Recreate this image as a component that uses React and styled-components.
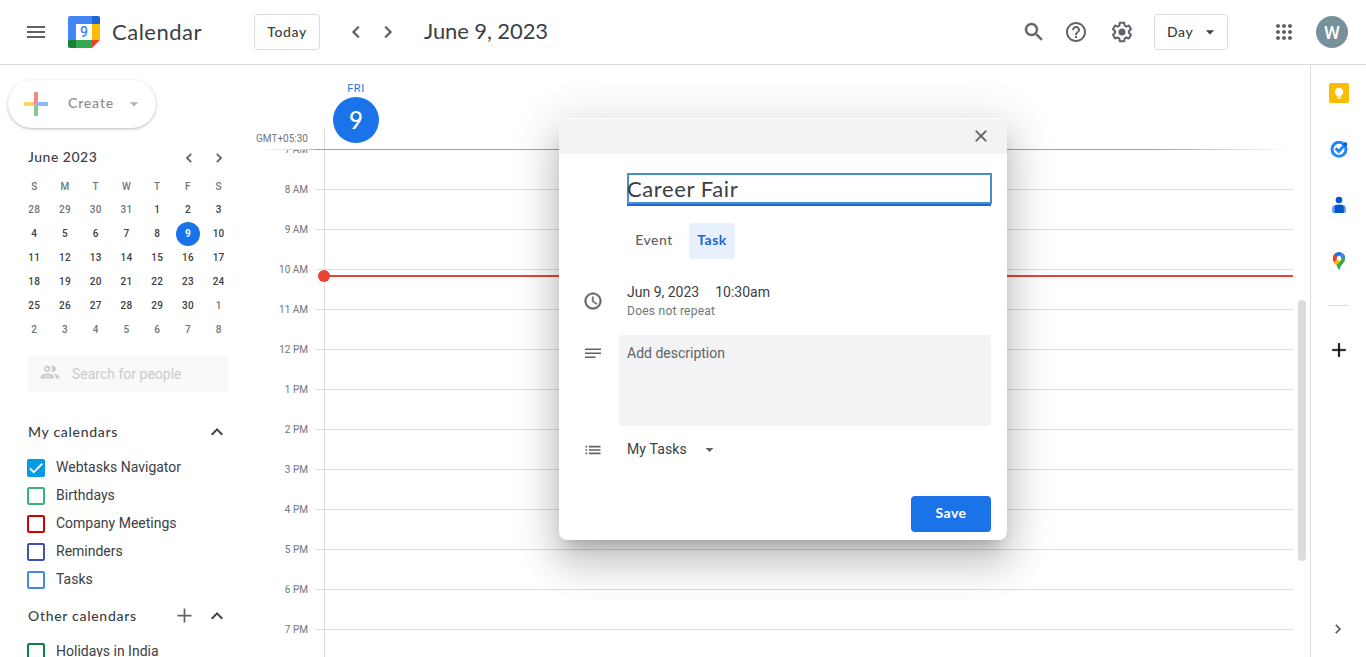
import React from "react";
import styled, { createGlobalStyle, css } from "styled-components";

const GlobalStyle = createGlobalStyle`
  *, *::before, *::after { box-sizing: border-box; }
  html, body { margin: 0; padding: 0; background: #fff; overflow: hidden; }
  body { font-family: Roboto, "Liberation Sans", sans-serif; color: #3c4043; }
  button { font: inherit; color: inherit; background: none; border: 0; padding: 0; margin: 0; }
  svg { display: block; flex: none; }
`;

const display = css`
  font-family: Lato, Roboto, sans-serif;
`;

const Page = styled.div`
  position: relative;
  display: flex;
  flex-direction: column;
  height: 657px;
  width: 1366px;
  overflow: hidden;
`;

/* Top bar */

const TopBar = styled.header`
  display: flex;
  align-items: center;
  height: 65px;
  flex: none;
  padding: 0 18px 1px 24px;
  border-bottom: 1px solid #dadce0;
  color: #5f6368;
`;

const Brand = styled.div`
  display: flex;
  align-items: center;
  gap: 12px;
  margin-left: 20px;
  width: 186px;
`;

const BrandName = styled.span`
  ${display}
  font-size: 22px;
  letter-spacing: 0.5px;
  color: #3c4043;
  white-space: nowrap;
`;

const OutlineButton = styled.button`
  ${display}
  display: flex;
  align-items: center;
  justify-content: ${(p) => (p.$menu ? "space-between" : "center")};
  width: ${(p) => p.$width}px;
  height: 36px;
  padding: ${(p) => (p.$menu ? "0 7px 0 12px" : "0")};
  border: 1px solid #dadce0;
  border-radius: 4px;
  font-size: 14px;
  font-weight: 500;
  letter-spacing: 0.6px;
  color: #3c4043;
`;

const Arrows = styled.div`
  display: flex;
  gap: 8px;
  margin: 0 24px;
`;

const CurrentDate = styled.h1`
  ${display}
  margin: 0;
  flex: 1;
  padding-bottom: 2px;
  font-size: 22px;
  font-weight: 400;
  letter-spacing: -0.1px;
  color: #3c4043;
`;

const Tools = styled.div`
  display: flex;
  align-items: center;
  gap: 22px;
  margin-right: 20px;
  & > svg:first-child { margin-right: -4px; }
`;

const AppsSlot = styled.div`
  margin-left: 44px;
`;

const Avatar = styled.div`
  display: flex;
  align-items: center;
  justify-content: center;
  width: 32px;
  height: 32px;
  margin-left: 20px;
  padding-top: 1px;
  border-radius: 50%;
  background: #78909c;
  color: #fff;
  font-size: 18px;
  font-weight: 500;
`;

/* Left column */

const Body = styled.div`
  display: flex;
  flex: 1;
  min-height: 0;
`;

const Sidebar = styled.aside`
  width: 256px;
  flex: none;
  padding-top: 15px;
  overflow: hidden;
`;

const CreateButton = styled.button`
  ${display}
  display: flex;
  align-items: center;
  width: 148px;
  height: 48px;
  margin-left: 8px;
  padding: 0 12px 0 10px;
  border-radius: 24px;
  box-shadow: 0 1px 2px rgba(60, 64, 67, 0.2), 0 1px 3px 1px rgba(60, 64, 67, 0.12);
  font-size: 14px;
  font-weight: 500;
  letter-spacing: 0.85px;
  & > * { opacity: 0.6; }
`;

const CreateLabel = styled.span`
  flex: 1;
  margin-left: 14px;
  padding-bottom: 4px;
  text-align: left;
`;

const MonthBar = styled.div`
  ${display}
  display: flex;
  align-items: center;
  height: 32px;
  margin-top: 13px;
  padding: 0 28px 1px 28px;
  font-size: 14px;
  font-weight: 500;
  letter-spacing: 0.5px;
`;

const MonthArrows = styled.div`
  display: flex;
  gap: 12px;
  margin-left: auto;
  padding-top: 2px;
  color: #5f6368;
`;

const MonthGrid = styled.div`
  display: grid;
  grid-template-columns: repeat(7, 1fr);
  grid-template-rows: 25px repeat(6, 24px);
  width: 215px;
  margin-left: 19px;
`;

const MonthCell = styled.div`
  display: flex;
  align-items: center;
  justify-content: center;
  padding-top: ${(p) => (p.$head ? 2 : 0)}px;
  padding-bottom: ${(p) => (p.$head ? 0 : 1)}px;
  font-size: 10px;
  font-weight: 500;
  letter-spacing: 0.3px;
  color: ${(p) => (p.$dim ? "#70757a" : "#3c4043")};
`;

const Selected = styled.span`
  display: flex;
  align-items: center;
  justify-content: center;
  flex: none;
  width: 24px;
  height: 24px;
  margin-bottom: -1px;
  padding-bottom: 1px;
  border-radius: 50%;
  background: #1a73e8;
  color: #fff;
  font-weight: 700;
`;

const PeopleSearch = styled.div`
  display: flex;
  align-items: center;
  gap: 11px;
  width: 200px;
  height: 36px;
  margin: 14px 0 0 28px;
  padding: 0 11px;
  border-radius: 4px;
  background: #f8f9f9;
  color: #c9cbcd;
  font-size: 14px;
  & > svg { margin-top: -4px; }
`;

const SectionHead = styled.div`
  ${display}
  display: flex;
  align-items: center;
  height: 36px;
  margin-top: ${(p) => p.$gap}px;
  padding: 0 27px 0 28px;
  font-size: 14px;
  font-weight: 500;
  letter-spacing: 0.7px;
  & > span { flex: 1; padding-bottom: 2px; }
`;

const SectionIcons = styled.div`
  display: flex;
  align-items: center;
  gap: 10px;
  & > svg:first-child { margin-top: -2px; }
`;

const CalendarRow = styled.label`
  display: flex;
  align-items: center;
  gap: 11px;
  height: 28px;
  padding: 0 0 0 27px;
  font-size: 14px;
  & > span { margin-top: -2px; }
`;

const Box = styled.i`
  display: flex;
  align-items: center;
  justify-content: center;
  width: 18px;
  height: 18px;
  border: 2px solid ${(p) => p.$color};
  border-radius: 2px;
  background: ${(p) => (p.$checked ? p.$color : "transparent")};
`;

const CalendarList = styled.div`
  padding-top: 4px;
`;

/* Day view */

const DayView = styled.main`
  display: flex;
  flex-direction: column;
  flex: 1;
  min-width: 0;
`;

const DayHead = styled.div`
  display: flex;
  height: 84px;
  flex: none;
`;

const Zone = styled.div`
  display: flex;
  align-items: flex-end;
  justify-content: flex-end;
  width: 60px;
  padding: 0 8px 5px 0;
  font-size: 10px;
  color: #70757a;
  white-space: nowrap;
`;

const HeadTick = styled.div`
  align-self: flex-end;
  width: 9px;
  height: 20px;
  border-right: 1px solid #dadce0;
`;

const DayLabel = styled.div`
  display: flex;
  flex-direction: column;
  align-items: center;
  width: 46px;
  margin-left: 8px;
  padding-top: 17px;
  color: #1a73e8;
  font-size: 11px;
  line-height: 14px;
  letter-spacing: 0.6px;
`;

const DayNumber = styled.div`
  ${display}
  display: flex;
  align-items: center;
  justify-content: center;
  width: 46px;
  height: 46px;
  margin-top: 1px;
  border-radius: 50%;
  background: #1a73e8;
  color: #fff;
  font-size: 24px;
  font-weight: 500;
  letter-spacing: 0;
`;

const HeadRule = styled.div`
  flex: none;
  height: 1px;
  width: 1038px;
  background: linear-gradient(to right, #fff 0, #d4d4d4 52px, #a2a2a2 61px, #a2a2a2 900px, #fff 1036px);
`;

const Scroller = styled.div`
  display: flex;
  flex: 1;
  min-height: 0;
  overflow: hidden;
`;

const Hours = styled.div`
  position: relative;
  width: 1038px;
  margin-top: -1px;
`;

const HourRow = styled.div`
  display: flex;
  height: 40px;
`;

const HourLabel = styled.div`
  width: 60px;
  height: 12px;
  margin-top: -5px;
  padding-right: 8px;
  text-align: right;
  font-size: 10px;
  line-height: 12px;
  color: #70757a;
`;

const HourTick = styled.div`
  width: 8px;
  border-top: 1px solid #dadce0;
`;

const HourCell = styled.div`
  flex: 1;
  border-top: 1px solid #dadce0;
  border-left: 1px solid #dadce0;
`;

const NowLine = styled.div`
  position: absolute;
  top: 126px;
  left: 68px;
  width: 969px;
  height: 2px;
  background: #ea4335;
  &::before {
    content: "";
    position: absolute;
    left: -6px;
    top: -5px;
    width: 12px;
    height: 12px;
    border-radius: 50%;
    background: #ea4335;
  }
`;

const ScrollThumb = styled.div`
  width: 8px;
  height: 261px;
  margin: 150px 0 0 4px;
  border-radius: 4px;
  background: #dadce0;
`;

/* Right rail */

const Rail = styled.aside`
  display: flex;
  flex-direction: column;
  align-items: center;
  width: 56px;
  padding-top: 18px;
  border-left: 1px solid #dadce0;
`;

const RailApp = styled.div`
  display: flex;
  align-items: center;
  justify-content: center;
  width: 20px;
  height: 20px;
  margin-bottom: 36px;
`;

const RailRule = styled.div`
  width: 20px;
  height: 1px;
  margin: -2px 0 34px;
  background: #dadce0;
`;

const RailToggle = styled.div`
  margin: auto 2px 19px 0;
  color: #5f6368;
`;

/* Task dialog */

const Dialog = styled.section`
  position: absolute;
  left: 559px;
  top: 118px;
  width: 448px;
  height: 422px;
  padding-top: 1px;
  border-radius: 8px;
  background: #fff;
  box-shadow: 0 24px 38px 3px rgba(0, 0, 0, 0.14), 0 9px 46px 8px rgba(0, 0, 0, 0.12),
    0 11px 15px -7px rgba(0, 0, 0, 0.2);
`;

const DialogBar = styled.div`
  display: flex;
  align-items: center;
  justify-content: flex-end;
  height: 35px;
  padding: 0 16px 1px 0;
  border-radius: 8px 8px 0 0;
  background: #f1f3f4;
  color: #5f6368;
`;

const TitleField = styled.div`
  width: 364px;
  height: 33px;
  margin: 19px 0 0 68px;
  border-bottom: 2px solid #1967d2;
`;

const TitleInput = styled.div`
  ${display}
  display: flex;
  align-items: center;
  width: 365px;
  height: 31px;
  border: 2px solid #4a8fcb;
  font-size: 22px;
  letter-spacing: 0.6px;
  white-space: nowrap;
  & > span { margin-left: -2px; }
`;

const Tabs = styled.div`
  display: flex;
  gap: 8px;
  margin: 17px 0 0 68px;
`;

const Tab = styled.button`
  ${display}
  width: ${(p) => p.$width}px;
  height: 36px;
  padding-bottom: 3px;
  border-radius: 4px;
  background: ${(p) => (p.$active ? "#e8f0fe" : "transparent")};
  color: ${(p) => (p.$active ? "#1967d2" : "#5f6368")};
  font-size: 14px;
  font-weight: ${(p) => (p.$active ? 700 : 500)};
  letter-spacing: 0.5px;
  white-space: nowrap;
`;

const Field = styled.div`
  display: flex;
  align-items: flex-start;
  padding-left: 24px;
  margin-top: ${(p) => p.$gap}px;
  color: #5f6368;
`;

const FieldIcon = styled.div`
  width: 20px;
  height: 20px;
  margin-top: ${(p) => p.$top}px;
`;

const When = styled.div`
  margin-left: 24px;
`;

const WhenMain = styled.div`
  display: flex;
  gap: 16px;
  font-size: 14px;
  line-height: 20px;
  color: #3c4043;
`;

const Repeat = styled.div`
  padding-top: 1px;
  font-size: 12px;
  line-height: 16px;
  letter-spacing: 0.25px;
  color: #70757a;
`;

const Description = styled.div`
  width: 372px;
  height: 91px;
  margin-left: 16px;
  padding: 8px;
  border-radius: 4px;
  background: #f1f3f4;
  font-size: 14px;
  line-height: 20px;
`;

const ListPicker = styled.div`
  display: flex;
  align-items: center;
  gap: 13px;
  height: 20px;
  margin-left: 24px;
  font-size: 14px;
  letter-spacing: 0.15px;
  & > span { color: #3c4043; }
`;

const SaveButton = styled.button`
  ${display}
  display: block;
  width: 80px;
  height: 36px;
  margin: 36px 16px 0 auto;
  padding-bottom: 3px;
  border-radius: 4px;
  background: #1a73e8;
  color: #fff;
  font-size: 14px;
  font-weight: 700;
  letter-spacing: 0.5px;
`;

const PATHS = {
  menu: "M3 18h18v-2H3v2zm0-5h18v-2H3v2zm0-7v2h18V6H3z",
  left: "M15.41 7.41L14 6l-6 6 6 6 1.41-1.41L10.83 12z",
  right: "M10 6L8.59 7.41 13.17 12l-4.58 4.59L10 18l6-6z",
  up: "M12 8l-6 6 1.41 1.41L12 10.83l4.59 4.58L18 14z",
  down: "M7 10l5 5 5-5z",
  search:
    "M15.5 14h-.79l-.28-.27C15.41 12.59 16 11.11 16 9.5 16 5.91 13.09 3 9.5 3S3 5.91 3 9.5 5.91 16 9.5 16c1.61 0 3.09-.59 4.23-1.57l.27.28v.79l5 4.99L20.49 19l-4.99-5zm-6 0C7.01 14 5 11.99 5 9.5S7.01 5 9.5 5 14 7.01 14 9.5 11.99 14 9.5 14z",
  help:
    "M11 18h2v-2h-2v2zm1-16C6.48 2 2 6.48 2 12s4.48 10 10 10 10-4.48 10-10S17.52 2 12 2zm0 18c-4.41 0-8-3.59-8-8s3.59-8 8-8 8 3.59 8 8-3.59 8-8 8zm0-14c-2.21 0-4 1.79-4 4h2c0-1.1.9-2 2-2s2 .9 2 2c0 2-3 1.75-3 5h2c0-2.25 3-2.5 3-5 0-2.21-1.79-4-4-4z",
  gear:
    "M13.85 22.25h-3.7c-.74 0-1.36-.54-1.45-1.27l-.27-1.89c-.27-.14-.53-.29-.79-.46l-1.8.72c-.7.26-1.47-.03-1.81-.65L2.2 15.53c-.35-.66-.2-1.44.36-1.88l1.53-1.19c-.01-.15-.02-.3-.02-.46 0-.15.01-.31.02-.46l-1.52-1.19c-.59-.45-.74-1.26-.37-1.88l1.85-3.19c.34-.62 1.11-.9 1.79-.63l1.81.73c.26-.17.52-.32.78-.46l.27-1.91c.09-.7.71-1.25 1.44-1.25h3.7c.74 0 1.36.54 1.45 1.27l.27 1.89c.27.14.53.29.79.46l1.8-.72c.71-.26 1.48.03 1.82.65l1.84 3.18c.36.66.2 1.44-.36 1.88l-1.52 1.19c.01.15.02.3.02.46s-.01.31-.02.46l1.52 1.19c.56.45.72 1.23.37 1.86l-1.86 3.22c-.34.62-1.11.9-1.8.63l-1.8-.72c-.26.17-.52.32-.78.46l-.27 1.91c-.1.68-.72 1.22-1.46 1.22zm-3.23-2h2.76l.37-2.55.53-.22c.44-.18.88-.44 1.34-.78l.45-.34 2.38.96 1.38-2.4-2.03-1.58.07-.56c.03-.26.06-.51.06-.78s-.03-.53-.06-.78l-.07-.56 2.03-1.58-1.39-2.4-2.39.96-.45-.35c-.42-.32-.87-.58-1.33-.77l-.52-.22-.37-2.55h-2.76l-.37 2.55-.53.21c-.44.19-.88.44-1.34.79l-.45.33-2.38-.95-1.39 2.39 2.03 1.58-.07.56a7 7 0 0 0-.06.79c0 .26.02.53.06.78l.07.56-2.03 1.58 1.38 2.4 2.39-.96.45.35c.43.33.86.58 1.33.77l.53.22.38 2.55zM12 8.500a3.500 3.500 0 1 0 0 7 3.500 3.500 0 0 0 0-7z",
  apps:
    "M6 8c1.1 0 2-.9 2-2s-.9-2-2-2-2 .9-2 2 .9 2 2 2zm6 12c1.1 0 2-.9 2-2s-.9-2-2-2-2 .9-2 2 .9 2 2 2zm-6 0c1.1 0 2-.9 2-2s-.9-2-2-2-2 .9-2 2 .9 2 2 2zm0-6c1.1 0 2-.9 2-2s-.9-2-2-2-2 .9-2 2 .9 2 2 2zm6 0c1.1 0 2-.9 2-2s-.9-2-2-2-2 .9-2 2 .9 2 2 2zm4-8c0 1.1.9 2 2 2s2-.9 2-2-.9-2-2-2-2 .9-2 2zm-4 2c1.1 0 2-.9 2-2s-.9-2-2-2-2 .9-2 2 .9 2 2 2zm6 6c1.1 0 2-.9 2-2s-.9-2-2-2-2 .9-2 2 .9 2 2 2zm0 6c1.1 0 2-.9 2-2s-.9-2-2-2-2 .9-2 2 .9 2 2 2z",
  people:
    "M9 13.75c-2.34 0-7 1.17-7 3.5V19h14v-1.75c0-2.33-4.66-3.5-7-3.5zM4.34 17c.84-.58 2.87-1.25 4.66-1.25s3.82.67 4.66 1.25H4.34zM9 12c1.93 0 3.5-1.57 3.5-3.5S10.93 5 9 5 5.5 6.57 5.5 8.5 7.07 12 9 12zm0-5c.83 0 1.5.67 1.5 1.5S9.83 10 9 10s-1.5-.67-1.5-1.5S8.17 7 9 7zm7.04 6.81c1.16.84 1.96 1.96 1.96 3.44V19h4v-1.75c0-2.02-3.5-3.17-5.96-3.44zM15 12c1.93 0 3.5-1.57 3.5-3.5S16.93 5 15 5c-.54 0-1.04.13-1.5.35.63.89 1 1.98 1 3.15s-.37 2.26-1 3.15c.46.22.96.35 1.5.35z",
  plus: "M20 13h-7v7h-2v-7H4v-2h7V4h2v7h7v2z",
  close:
    "M19 6.41L17.59 5 12 10.59 6.41 5 5 6.41 10.59 12 5 17.59 6.41 19 12 13.41 17.59 19 19 17.59 13.41 12z",
  clock:
    "M11.99 2C6.47 2 2 6.48 2 12s4.47 10 9.99 10C17.52 22 22 17.52 22 12S17.52 2 11.99 2zM12 20c-4.42 0-8-3.58-8-8s3.58-8 8-8 8 3.58 8 8-3.58 8-8 8zm.5-13H11v6l5.25 3.15.75-1.23-4.5-2.67V7z",
  notes: "M21.600 8.400H2.400V6.600h19.200v1.800zM15 18H2.400v-1.800H15V18zm6.600-4.800H2.400v-1.800h19.200v1.800z",
  list: "M3 7h2v2H3V7zm0 4h2v2H3v-2zm0 4h2v2H3v-2zm4-8h14v2H7V7zm0 4h14v2H7v-2zm0 4h14v2H7v-2z",
  check: "M9 16.17L4.83 12l-1.42 1.41L9 19 21 7l-1.41-1.41z",
};

const Icon = ({ name, size = 24, color = "currentColor", bold = 0 }) => (
  <svg width={size} height={size} viewBox="0 0 24 24" fill={color} stroke={bold ? color : "none"} strokeWidth={bold}>
    <path d={PATHS[name]} />
  </svg>
);

const CalendarLogo = () => (
  <svg width="32" height="32" viewBox="0 0 32 32">
    <path d="M2 0h22v8H8v16H0V2a2 2 0 0 1 2-2z" fill="#4285f4" />
    <path d="M24 0h6a2 2 0 0 1 2 2v6h-8z" fill="#1967d2" />
    <path d="M24 8h8v16h-8z" fill="#fbbc04" />
    <path d="M8 24h16v8H8z" fill="#34a853" />
    <path d="M0 24h8v8H2a2 2 0 0 1-2-2z" fill="#188038" />
    <path d="M24 24h8l-8 8z" fill="#ea4335" />
    <text x="16" y="21" textAnchor="middle" fontFamily="Roboto, sans-serif" fontSize="14" fontWeight="500" fill="#4285f4">
      9
    </text>
  </svg>
);

const CreatePlus = () => (
  <svg width="36" height="36" viewBox="0 0 36 36">
    <path fill="#34A853" d="M16 16v14h4V20z" />
    <path fill="#4285F4" d="M30 16H20l-4 4h14z" />
    <path fill="#FBBC05" d="M6 16v4h10l4-4z" />
    <path fill="#EA4335" d="M20 16V6h-4v14z" />
  </svg>
);

const KeepLogo = () => (
  <svg width="20" height="20" viewBox="0 0 20 20">
    <rect width="20" height="20" rx="1.5" fill="#fbbc04" />
    <circle cx="10" cy="9" r="4.2" fill="#fff" />
    <path d="M8 11h4v2.6H8zM8 14.3h4v1.3H8z" fill="#fff" />
  </svg>
);

const TasksLogo = () => (
  <svg width="20" height="20" viewBox="0 0 20 20" fill="none">
    <circle cx="10" cy="10.3" r="7" stroke="#2684fc" strokeWidth="3" />
    <path d="M6.6 9.2l3.2 3.2 7-7.6" stroke="#2684fc" strokeWidth="3" />
    <path d="M13.600 5.600l2.700-2.900 2.400 2.200-2.800 3z" fill="#0066da" />
  </svg>
);

const ContactsLogo = () => (
  <svg width="20" height="20" viewBox="0 0 20 20">
    <circle cx="10" cy="5" r="3.3" fill="#0057cc" />
    <path d="M7 9.7h6a4 4 0 0 1 4 4V16a2 2 0 0 1-2 2H5a2 2 0 0 1-2-2v-2.3a4 4 0 0 1 4-4z" fill="#6f9bfb" />
    <path d="M8.600 9.700h3.400a3.200 3.200 0 0 1 2.800 3.200V18H5.600v-5.100a3.200 3.200 0 0 1 3-3.200z" fill="#0057cc" />
  </svg>
);

const MapsLogo = () => (
  <svg width="20" height="20" viewBox="0 0 20 20">
    <defs>
      <clipPath id="pin">
        <path d="M10 1.300a6.200 6.200 0 0 1 6.200 6.200c0 4.300-4.400 6-5.500 10.600-.2.8-1.200.8-1.400 0C8.200 13.500 3.800 11.800 3.800 7.500A6.200 6.200 0 0 1 10 1.300z" />
      </clipPath>
    </defs>
    <g clipPath="url(#pin)">
      <rect width="20" height="20" fill="#34a853" />
      <path d="M0 0h20v4.500L10 7.500 4 3z" fill="#4285f4" />
      <path d="M6 0h7l-2 4-5 1z" fill="#1a73e8" />
      <path d="M3 4l2.200-1.500L10 7.500l-4.700 5.500L3 9z" fill="#ea4335" />
      <path d="M4.300 12L13 3.500l-1 6L6.500 15.500z" fill="#fbbc04" />
      <path d="M13.500 2l3.500 2-5 3.500-2-1z" fill="#4285f4" />
    </g>
    <circle cx="10" cy="7.400" r="2.300" fill="#fff" />
  </svg>
);

const WEEKDAYS = ["S", "M", "T", "W", "T", "F", "S"];
const DAYS = Array.from({ length: 42 }, (_, i) => {
  if (i < 4) return { n: 28 + i, dim: true };
  if (i < 34) return { n: i - 3 };
  return { n: i - 33, dim: true };
});
const HOURS = [
  "7 AM", "8 AM", "9 AM", "10 AM", "11 AM", "12 PM", "1 PM",
  "2 PM", "3 PM", "4 PM", "5 PM", "6 PM", "7 PM",
];
const MINE = [
  { name: "Webtasks Navigator", color: "#039be5", checked: true },
  { name: "Birthdays", color: "#33b679" },
  { name: "Company Meetings", color: "#d50000" },
  { name: "Reminders", color: "#3f51b5" },
  { name: "Tasks", color: "#4285f4" },
];
const OTHERS = [{ name: "Holidays in India", color: "#0b8043" }];

const Calendars = ({ items }) => (
  <CalendarList>
    {items.map((c) => (
      <CalendarRow key={c.name}>
        <Box $color={c.color} $checked={c.checked}>
          {c.checked && <Icon name="check" size={18} color="#fff" bold={0.6} />}
        </Box>
        <span>{c.name}</span>
      </CalendarRow>
    ))}
  </CalendarList>
);

export default function App() {
  return (
    <Page>
      <GlobalStyle />
      <TopBar>
        <Icon name="menu" />
        <Brand>
          <CalendarLogo />
          <BrandName>Calendar</BrandName>
        </Brand>
        <OutlineButton $width={66}>Today</OutlineButton>
        <Arrows>
          <Icon name="left" bold={0.3} />
          <Icon name="right" bold={0.3} />
        </Arrows>
        <CurrentDate>June 9, 2023</CurrentDate>
        <Tools>
          <Icon name="search" bold={0.4} />
          <Icon name="help" />
          <Icon name="gear" />
        </Tools>
        <OutlineButton $width={74} $menu>
          Day
          <Icon name="down" size={20} />
        </OutlineButton>
        <AppsSlot>
          <Icon name="apps" />
        </AppsSlot>
        <Avatar>W</Avatar>
      </TopBar>

      <Body>
        <Sidebar>
          <CreateButton>
            <CreatePlus />
            <CreateLabel>Create</CreateLabel>
            <Icon name="down" size={20} color="#80868b" />
          </CreateButton>
          <MonthBar>
            June 2023
            <MonthArrows>
              <Icon name="left" size={18} bold={0.6} />
              <Icon name="right" size={18} bold={0.6} />
            </MonthArrows>
          </MonthBar>
          <MonthGrid>
            {WEEKDAYS.map((d, i) => (
              <MonthCell key={`w${i}`} $dim $head>{d}</MonthCell>
            ))}
            {DAYS.map((d, i) => (
              <MonthCell key={i} $dim={d.dim}>
                {d.n === 9 ? <Selected>9</Selected> : d.n}
              </MonthCell>
            ))}
          </MonthGrid>
          <PeopleSearch>
            <Icon name="people" size={22} />
            Search for people
          </PeopleSearch>
          <SectionHead $gap={22}>
            <span>My calendars</span>
            <Icon name="up" />
          </SectionHead>
          <Calendars items={MINE} />
          <SectionHead $gap={4}>
            <span>Other calendars</span>
            <SectionIcons>
              <Icon name="plus" size={21} color="#5f6368" />
              <Icon name="up" />
            </SectionIcons>
          </SectionHead>
          <Calendars items={OTHERS} />
        </Sidebar>

        <DayView>
          <DayHead>
            <Zone>GMT+05:30</Zone>
            <HeadTick />
            <DayLabel>
              FRI
              <DayNumber>9</DayNumber>
            </DayLabel>
          </DayHead>
          <HeadRule />
          <Scroller>
            <Hours>
              {HOURS.map((h) => (
                <HourRow key={h}>
                  <HourLabel>{h}</HourLabel>
                  <HourTick />
                  <HourCell />
                </HourRow>
              ))}
              <NowLine />
            </Hours>
            <ScrollThumb />
          </Scroller>
        </DayView>

        <Rail>
          <RailApp><KeepLogo /></RailApp>
          <RailApp><TasksLogo /></RailApp>
          <RailApp><ContactsLogo /></RailApp>
          <RailApp><MapsLogo /></RailApp>
          <RailRule />
          <Icon name="plus" size={20} color="#000" bold={0.4} />
          <RailToggle>
            <Icon name="right" size={18} bold={0.6} />
          </RailToggle>
        </Rail>
      </Body>

      <Dialog>
        <DialogBar>
          <Icon name="close" size={20} bold={0.3} />
        </DialogBar>
        <TitleField>
          <TitleInput><span>Career Fair</span></TitleInput>
        </TitleField>
        <Tabs>
          <Tab $width={54}>Event</Tab>
          <Tab $width={46} $active>Task</Tab>
        </Tabs>
        <Field $gap={23}>
          <FieldIcon $top={9}><Icon name="clock" size={20} bold={0.5} /></FieldIcon>
          <When>
            <WhenMain><span>Jun 9, 2023</span><span>10:30am</span></WhenMain>
            <Repeat>Does not repeat</Repeat>
          </When>
        </Field>
        <Field $gap={16}>
          <FieldIcon $top={8}><Icon name="notes" size={20} /></FieldIcon>
          <Description>Add description</Description>
        </Field>
        <Field $gap={13}>
          <FieldIcon $top={1}><Icon name="list" size={20} /></FieldIcon>
          <ListPicker>
            <span>My Tasks</span>
            <Icon name="down" size={19} />
          </ListPicker>
        </Field>
        <SaveButton>Save</SaveButton>
      </Dialog>
    </Page>
  );
}
